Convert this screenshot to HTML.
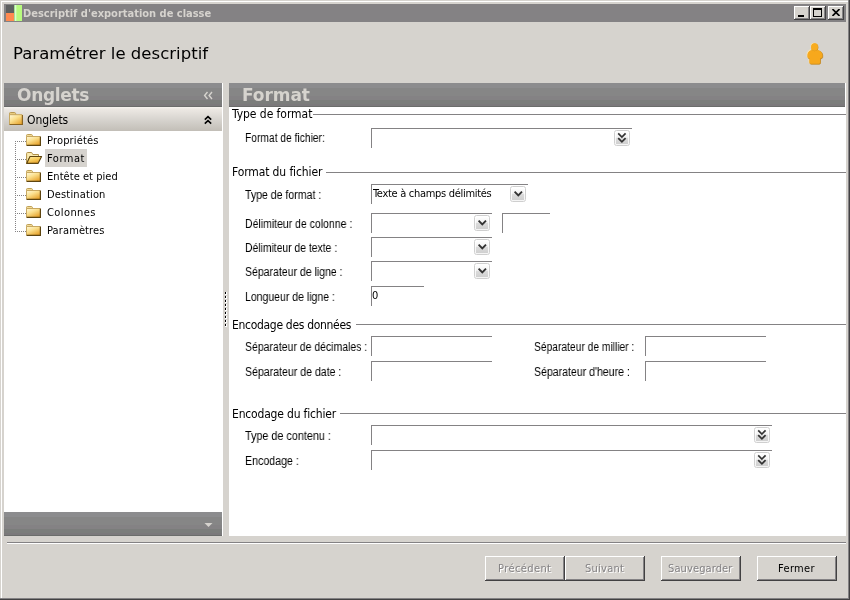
<!DOCTYPE html>
<html lang='fr'><head><meta charset='utf-8'><title>Descriptif d'exportation de classe</title>
<style>
html,body{margin:0;padding:0;width:850px;height:600px;overflow:hidden;background:#D6D3CE}
#w{position:relative;width:850px;height:600px;overflow:hidden}
.a{position:absolute;display:block}
.t{position:absolute;white-space:nowrap;margin:0;padding:0;will-change:transform}
</style></head>
<body><div id='w'>
<div class='a' style='left:0px;top:0px;width:850px;height:600px;background:#D6D3CE;'></div>
<div class='a' style='left:1px;top:1px;width:847px;height:1px;background:#fff;'></div>
<div class='a' style='left:1px;top:1px;width:1px;height:597px;background:#fff;'></div>
<div class='a' style='left:848px;top:0px;width:1px;height:599px;background:#848284;'></div>
<div class='a' style='left:0px;top:598px;width:849px;height:1px;background:#848284;'></div>
<div class='a' style='left:849px;top:0px;width:1px;height:600px;background:#424142;'></div>
<div class='a' style='left:0px;top:599px;width:850px;height:1px;background:#424142;'></div>
<div class='a' style='left:4px;top:4px;width:842px;height:18px;background:#848284;'></div>
<div class='a' style='left:6px;top:5px;width:8px;height:8px;background:#5E6060;'></div>
<div class='a' style='left:6px;top:13px;width:8px;height:8px;background:#FF8A50;'></div>
<div class='a' style='left:14px;top:5px;width:8px;height:16px;background:linear-gradient(90deg,#8fd070 0,#d8ffd0 1.5px,#B8FB7E 3px);'></div>
<div class='a' style='left:794px;top:6px;width:16px;height:14px;background:#D6D3CE;box-shadow:inset -1px -1px 0 #424142, inset 1px 1px 0 #fff, inset -2px -2px 0 #848284;'><div class='a' style='left:4px;top:9px;width:6px;height:2px;background:#000'></div></div>
<div class='a' style='left:810px;top:6px;width:16px;height:14px;background:#D6D3CE;box-shadow:inset -1px -1px 0 #424142, inset 1px 1px 0 #fff, inset -2px -2px 0 #848284;'><div class='a' style='left:3px;top:2px;width:9px;height:9px;box-sizing:border-box;border:1px solid #000;border-top-width:2px'></div></div>
<div class='a' style='left:828px;top:6px;width:16px;height:14px;background:#D6D3CE;box-shadow:inset -1px -1px 0 #424142, inset 1px 1px 0 #fff, inset -2px -2px 0 #848284;'><svg class='a' style='left:4px;top:3px' width='8' height='7' viewBox='0 0 8 7'><path d='M0.5 0 L7.5 7 M7.5 0 L0.5 7' stroke='#000' stroke-width='1.6' fill='none'/></svg></div>
<svg class='a' style='left:805px;top:42px' width='20' height='24' viewBox='0 0 20 24'>
<g stroke-linejoin='round'>
<path d='M6.2 8.2 C4 8.8 2.6 10.5 2.6 12.8 L2.6 14.8 Q2.7 16.4 4.5 16.3 L4.5 20.4 Q4.5 21.7 5.8 21.7 L13.7 21.7 Q15 21.7 15 20.4 L15 16.3 Q16.9 16.4 17.2 14.8 L17.2 12.8 C17.2 10.5 15.5 8.8 13 8.2 Z' transform='translate(-0.5,-0.5)' fill='#FFE4A8' stroke='#FFE4A8' stroke-width='0.8'/>
<ellipse cx='9.2' cy='4.6' rx='3.6' ry='3.9' fill='#FFE4A8'/>
<path d='M6.2 8.2 C4 8.8 2.6 10.5 2.6 12.8 L2.6 14.8 Q2.7 16.4 4.5 16.3 L4.5 20.4 Q4.5 21.7 5.8 21.7 L13.7 21.7 Q15 21.7 15 20.4 L15 16.3 Q16.9 16.4 17.2 14.8 L17.2 12.8 C17.2 10.5 15.5 8.8 13 8.2 Z' transform='translate(0.5,0.5)' fill='#C88A20' stroke='#C88A20' stroke-width='0.8'/>
<ellipse cx='9.9' cy='5.3' rx='3.5' ry='3.8' fill='#D09028'/>
<path d='M6.2 8.2 C4 8.8 2.6 10.5 2.6 12.8 L2.6 14.8 Q2.7 16.4 4.5 16.3 L4.5 20.4 Q4.5 21.7 5.8 21.7 L13.7 21.7 Q15 21.7 15 20.4 L15 16.3 Q16.9 16.4 17.2 14.8 L17.2 12.8 C17.2 10.5 15.5 8.8 13 8.2 Z' fill='#F7A81C'/>
<path d='M6.3 7.2 Q9.6 10.2 12.9 7.2' fill='none' stroke='#D08C18' stroke-width='0.9'/>
<ellipse cx='9.55' cy='4.95' rx='3.4' ry='3.7' fill='#F8AC20'/>
</g></svg>
<div class='a' style='left:4px;top:83px;width:219px;height:453px;background:#fff;'></div>
<div class='a' style='left:4px;top:83px;width:218px;height:24px;background:linear-gradient(#8C8C8E 0,#8C8C8E 4.5px,#868686 5.5px,#868686 12.5px,#848284 13.5px,#848284 16.5px,#7B7D7B 17.5px,#7B7D7B 20.5px,#7B797B 21.5px,#7B797B 22.8px,#6B6D6B 23px,#6B6D6B 24px);'></div>
<div class='a' style='left:4px;top:107px;width:218px;height:24px;background:linear-gradient(#F6F3EF 0,#ECE8E3 10%,#D8D5D0 50%,#C2BEB7 100%);'></div>
<div class='a' style='left:4px;top:512px;width:218px;height:24px;background:linear-gradient(#8C8C8E 0,#8C8C8E 4.5px,#868686 5.5px,#868686 12.5px,#848284 13.5px,#848284 16.5px,#7B7D7B 17.5px,#7B7D7B 20.5px,#7B797B 21.5px,#7B797B 22.8px,#6B6D6B 23px,#6B6D6B 24px);'></div>
<svg class='a' style='left:203px;top:91px' width='11' height='9' viewBox='0 0 11 9'><path d='M4.5 1 L1.6 4.5 L4.5 8 M9 1 L6.1 4.5 L9 8' stroke='#D6D3CE' stroke-width='1.4' fill='none'/></svg>
<svg class='a' style='left:203px;top:115px' width='10' height='10' viewBox='0 0 10 10'><path d='M1.8 4.6 L5 1.6 L8.2 4.6 M1.8 8.6 L5 5.6 L8.2 8.6' stroke='#000' stroke-width='1.6' fill='none'/></svg>
<svg class='a' style='left:204px;top:522px' width='9' height='6' viewBox='0 0 9 6'><path d='M0.5 1 L8.5 1 L4.5 5 Z' fill='#D6D3CE'/></svg>
<div class='a' style='left:225px;top:292px;width:2.4px;height:3px;background:#fff;'></div>
<div class='a' style='left:225px;top:292px;width:1.3px;height:2px;background:#000;'></div>
<div class='a' style='left:225px;top:296px;width:2.4px;height:3px;background:#fff;'></div>
<div class='a' style='left:225px;top:296px;width:1.3px;height:2px;background:#000;'></div>
<div class='a' style='left:225px;top:300px;width:2.4px;height:3px;background:#fff;'></div>
<div class='a' style='left:225px;top:300px;width:1.3px;height:2px;background:#000;'></div>
<div class='a' style='left:225px;top:304px;width:2.4px;height:3px;background:#fff;'></div>
<div class='a' style='left:225px;top:304px;width:1.3px;height:2px;background:#000;'></div>
<div class='a' style='left:225px;top:308px;width:2.4px;height:3px;background:#fff;'></div>
<div class='a' style='left:225px;top:308px;width:1.3px;height:2px;background:#000;'></div>
<div class='a' style='left:225px;top:312px;width:2.4px;height:3px;background:#fff;'></div>
<div class='a' style='left:225px;top:312px;width:1.3px;height:2px;background:#000;'></div>
<div class='a' style='left:225px;top:316px;width:2.4px;height:3px;background:#fff;'></div>
<div class='a' style='left:225px;top:316px;width:1.3px;height:2px;background:#000;'></div>
<div class='a' style='left:225px;top:320px;width:2.4px;height:3px;background:#fff;'></div>
<div class='a' style='left:225px;top:320px;width:1.3px;height:2px;background:#000;'></div>
<div class='a' style='left:225px;top:324px;width:2.4px;height:3px;background:#fff;'></div>
<div class='a' style='left:225px;top:324px;width:1.3px;height:2px;background:#000;'></div>
<div class='a' style='left:229px;top:83px;width:617px;height:453px;background:#fff;'></div>
<div class='a' style='left:229px;top:83px;width:616px;height:24px;background:linear-gradient(#8C8C8E 0,#8C8C8E 4.5px,#868686 5.5px,#868686 12.5px,#848284 13.5px,#848284 16.5px,#7B7D7B 17.5px,#7B7D7B 20.5px,#7B797B 21.5px,#7B797B 22.8px,#6B6D6B 23px,#6B6D6B 24px);'></div>
<svg class='a' style='left:9px;top:112px' width='15' height='14' viewBox='0 0 15 14'>
<defs><linearGradient id='gg' x1='0' y1='0' x2='0.8' y2='1'><stop offset='0' stop-color='#FFF9DC'/><stop offset='0.45' stop-color='#FBE08E'/><stop offset='1' stop-color='#E6A22C'/></linearGradient></defs>
<path d='M0.5 3 L0.5 1.5 Q0.5 0.5 1.5 0.5 L5.5 0.5 Q6.3 0.5 6.6 1.5 L7 3 Z' fill='#E8CC80' stroke='#B89850' stroke-width='1'/>
<rect x='0.5' y='2.7' width='13' height='10' fill='url(#gg)' stroke='none'/>
<path d='M0.5 12.5 L0.5 2.7 L13.2 2.7' fill='none' stroke='#C8A860' stroke-width='1'/>
<path d='M0.5 12.5 L13.4 12.5 L13.4 2.9' fill='none' stroke='#8A6420' stroke-width='1.2'/>
</svg>
<div class='a' style='left:15px;top:141px;width:1px;height:91px;background:repeating-linear-gradient(180deg,#848284 0 1px,transparent 1px 2px);'></div>
<div class='a' style='left:15px;top:141px;width:11px;height:1px;background:repeating-linear-gradient(90deg,#848284 0 1px,transparent 1px 2px);'></div>
<svg class='a' style='left:26px;top:134px' width='16' height='13' viewBox='0 0 16 13'>
<defs><linearGradient id='fg1' x1='0' y1='0' x2='0.7' y2='1'><stop offset='0' stop-color='#FFF9DC'/><stop offset='0.45' stop-color='#FBE08E'/><stop offset='1' stop-color='#E6A22C'/></linearGradient></defs>
<path d='M0.5 2.5 L0.5 1.5 Q0.5 0.5 1.5 0.5 L5.3 0.5 Q6.2 0.5 6.5 1.5 L6.8 2.5 Z' fill='#F3DC98' stroke='#BFA058' stroke-width='1'/>
<rect x='0.5' y='2.5' width='14' height='9' fill='url(#fg1)' stroke='none'/>
<path d='M0.5 11 L0.5 2.5 L14 2.5' fill='none' stroke='#C8A860' stroke-width='1'/>
<path d='M0.5 11.4 L14.4 11.4 L14.4 2.6' fill='none' stroke='#5E4510' stroke-width='1.2'/>
</svg>
<div class='a' style='left:15px;top:159px;width:11px;height:1px;background:repeating-linear-gradient(90deg,#848284 0 1px,transparent 1px 2px);'></div>
<svg class='a' style='left:26px;top:152px' width='17' height='13' viewBox='0 0 17 13'>
<defs><linearGradient id='og' x1='0' y1='0' x2='0.6' y2='1'><stop offset='0' stop-color='#FFF0B0'/><stop offset='0.5' stop-color='#F9D060'/><stop offset='1' stop-color='#E6A22C'/></linearGradient></defs>
<path d='M0.6 11.4 L0.6 1.5 Q0.6 0.5 1.6 0.5 L5.2 0.5 Q6.1 0.5 6.4 1.5 L6.8 2.5 L12.5 2.5 L12.5 4.5 L4 4.5 Z' fill='#FBEBB0' stroke='#B09048' stroke-width='1'/>
<path d='M4 4.5 L15.6 4.5 L12 11.4 L0.7 11.4 Z' fill='url(#og)' stroke='#5E4510' stroke-width='1.1' stroke-linejoin='round'/>
</svg>
<div class='a' style='left:15px;top:177px;width:11px;height:1px;background:repeating-linear-gradient(90deg,#848284 0 1px,transparent 1px 2px);'></div>
<svg class='a' style='left:26px;top:170px' width='16' height='13' viewBox='0 0 16 13'>
<defs><linearGradient id='fg2' x1='0' y1='0' x2='0.7' y2='1'><stop offset='0' stop-color='#FFF9DC'/><stop offset='0.45' stop-color='#FBE08E'/><stop offset='1' stop-color='#E6A22C'/></linearGradient></defs>
<path d='M0.5 2.5 L0.5 1.5 Q0.5 0.5 1.5 0.5 L5.3 0.5 Q6.2 0.5 6.5 1.5 L6.8 2.5 Z' fill='#F3DC98' stroke='#BFA058' stroke-width='1'/>
<rect x='0.5' y='2.5' width='14' height='9' fill='url(#fg2)' stroke='none'/>
<path d='M0.5 11 L0.5 2.5 L14 2.5' fill='none' stroke='#C8A860' stroke-width='1'/>
<path d='M0.5 11.4 L14.4 11.4 L14.4 2.6' fill='none' stroke='#5E4510' stroke-width='1.2'/>
</svg>
<div class='a' style='left:15px;top:195px;width:11px;height:1px;background:repeating-linear-gradient(90deg,#848284 0 1px,transparent 1px 2px);'></div>
<svg class='a' style='left:26px;top:188px' width='16' height='13' viewBox='0 0 16 13'>
<defs><linearGradient id='fg3' x1='0' y1='0' x2='0.7' y2='1'><stop offset='0' stop-color='#FFF9DC'/><stop offset='0.45' stop-color='#FBE08E'/><stop offset='1' stop-color='#E6A22C'/></linearGradient></defs>
<path d='M0.5 2.5 L0.5 1.5 Q0.5 0.5 1.5 0.5 L5.3 0.5 Q6.2 0.5 6.5 1.5 L6.8 2.5 Z' fill='#F3DC98' stroke='#BFA058' stroke-width='1'/>
<rect x='0.5' y='2.5' width='14' height='9' fill='url(#fg3)' stroke='none'/>
<path d='M0.5 11 L0.5 2.5 L14 2.5' fill='none' stroke='#C8A860' stroke-width='1'/>
<path d='M0.5 11.4 L14.4 11.4 L14.4 2.6' fill='none' stroke='#5E4510' stroke-width='1.2'/>
</svg>
<div class='a' style='left:15px;top:213px;width:11px;height:1px;background:repeating-linear-gradient(90deg,#848284 0 1px,transparent 1px 2px);'></div>
<svg class='a' style='left:26px;top:206px' width='16' height='13' viewBox='0 0 16 13'>
<defs><linearGradient id='fg4' x1='0' y1='0' x2='0.7' y2='1'><stop offset='0' stop-color='#FFF9DC'/><stop offset='0.45' stop-color='#FBE08E'/><stop offset='1' stop-color='#E6A22C'/></linearGradient></defs>
<path d='M0.5 2.5 L0.5 1.5 Q0.5 0.5 1.5 0.5 L5.3 0.5 Q6.2 0.5 6.5 1.5 L6.8 2.5 Z' fill='#F3DC98' stroke='#BFA058' stroke-width='1'/>
<rect x='0.5' y='2.5' width='14' height='9' fill='url(#fg4)' stroke='none'/>
<path d='M0.5 11 L0.5 2.5 L14 2.5' fill='none' stroke='#C8A860' stroke-width='1'/>
<path d='M0.5 11.4 L14.4 11.4 L14.4 2.6' fill='none' stroke='#5E4510' stroke-width='1.2'/>
</svg>
<div class='a' style='left:15px;top:231px;width:11px;height:1px;background:repeating-linear-gradient(90deg,#848284 0 1px,transparent 1px 2px);'></div>
<svg class='a' style='left:26px;top:224px' width='16' height='13' viewBox='0 0 16 13'>
<defs><linearGradient id='fg5' x1='0' y1='0' x2='0.7' y2='1'><stop offset='0' stop-color='#FFF9DC'/><stop offset='0.45' stop-color='#FBE08E'/><stop offset='1' stop-color='#E6A22C'/></linearGradient></defs>
<path d='M0.5 2.5 L0.5 1.5 Q0.5 0.5 1.5 0.5 L5.3 0.5 Q6.2 0.5 6.5 1.5 L6.8 2.5 Z' fill='#F3DC98' stroke='#BFA058' stroke-width='1'/>
<rect x='0.5' y='2.5' width='14' height='9' fill='url(#fg5)' stroke='none'/>
<path d='M0.5 11 L0.5 2.5 L14 2.5' fill='none' stroke='#C8A860' stroke-width='1'/>
<path d='M0.5 11.4 L14.4 11.4 L14.4 2.6' fill='none' stroke='#5E4510' stroke-width='1.2'/>
</svg>
<div class='a' style='left:45px;top:149px;width:42px;height:18px;background:#D6D3CE;'></div>
<div class='a' style='left:313px;top:114px;width:533px;height:1px;background:#848284;'></div>
<div class='a' style='left:326px;top:172px;width:520px;height:1px;background:#848284;'></div>
<div class='a' style='left:356px;top:324px;width:490px;height:1px;background:#848284;'></div>
<div class='a' style='left:340px;top:413px;width:506px;height:1px;background:#848284;'></div>
<div class='a' style='left:371px;top:128px;width:261px;height:20px;border-top:1px solid #848284;border-left:1px solid #848284;box-sizing:border-box;background:#fff;'></div>
<svg class='a' style='left:614px;top:130px' width='16' height='16' viewBox='0 0 16 16'><defs><linearGradient id='b5' x1='0' y1='0' x2='0' y2='1'><stop offset='0' stop-color='#fff'/><stop offset='0.45' stop-color='#f2f2f2'/><stop offset='0.5' stop-color='#dcdcdc'/><stop offset='1' stop-color='#cfcfcf'/></linearGradient></defs><rect x='0.5' y='0.5' width='15' height='15' rx='2' fill='#fff' stroke='#cfcfcf'/><rect x='1.8' y='1.8' width='12.4' height='12.4' fill='url(#b5)'/><path d='M4.2 3.3 L7.9 7 L11.6 3.3 M4.2 8.1 L7.9 11.8 L11.6 8.1' stroke='#333' stroke-width='1.7' fill='none'/></svg>
<div class='a' style='left:371px;top:184px;width:157px;height:20px;border-top:1px solid #848284;border-left:1px solid #848284;box-sizing:border-box;background:#fff;'></div>
<svg class='a' style='left:510px;top:186px' width='16' height='16' viewBox='0 0 16 16'><defs><linearGradient id='b6' x1='0' y1='0' x2='0' y2='1'><stop offset='0' stop-color='#fff'/><stop offset='0.45' stop-color='#f2f2f2'/><stop offset='0.5' stop-color='#dcdcdc'/><stop offset='1' stop-color='#cfcfcf'/></linearGradient></defs><rect x='0.5' y='0.5' width='15' height='15' rx='2' fill='#fff' stroke='#cfcfcf'/><rect x='1.8' y='1.8' width='12.4' height='12.4' fill='url(#b6)'/><path d='M4.6 5.6 L8.3 9.4 L12 5.6' stroke='#333' stroke-width='1.9' fill='none'/></svg>
<div class='a' style='left:371px;top:213px;width:121px;height:20px;border-top:1px solid #848284;border-left:1px solid #848284;box-sizing:border-box;background:#fff;'></div>
<svg class='a' style='left:474px;top:215px' width='16' height='16' viewBox='0 0 16 16'><defs><linearGradient id='b7' x1='0' y1='0' x2='0' y2='1'><stop offset='0' stop-color='#fff'/><stop offset='0.45' stop-color='#f2f2f2'/><stop offset='0.5' stop-color='#dcdcdc'/><stop offset='1' stop-color='#cfcfcf'/></linearGradient></defs><rect x='0.5' y='0.5' width='15' height='15' rx='2' fill='#fff' stroke='#cfcfcf'/><rect x='1.8' y='1.8' width='12.4' height='12.4' fill='url(#b7)'/><path d='M4.6 5.6 L8.3 9.4 L12 5.6' stroke='#333' stroke-width='1.9' fill='none'/></svg>
<div class='a' style='left:502px;top:213px;width:48px;height:20px;border-top:1px solid #848284;border-left:1px solid #848284;box-sizing:border-box;background:#fff;'></div>
<div class='a' style='left:371px;top:237px;width:121px;height:20px;border-top:1px solid #848284;border-left:1px solid #848284;box-sizing:border-box;background:#fff;'></div>
<svg class='a' style='left:474px;top:239px' width='16' height='16' viewBox='0 0 16 16'><defs><linearGradient id='b8' x1='0' y1='0' x2='0' y2='1'><stop offset='0' stop-color='#fff'/><stop offset='0.45' stop-color='#f2f2f2'/><stop offset='0.5' stop-color='#dcdcdc'/><stop offset='1' stop-color='#cfcfcf'/></linearGradient></defs><rect x='0.5' y='0.5' width='15' height='15' rx='2' fill='#fff' stroke='#cfcfcf'/><rect x='1.8' y='1.8' width='12.4' height='12.4' fill='url(#b8)'/><path d='M4.6 5.6 L8.3 9.4 L12 5.6' stroke='#333' stroke-width='1.9' fill='none'/></svg>
<div class='a' style='left:371px;top:261px;width:121px;height:20px;border-top:1px solid #848284;border-left:1px solid #848284;box-sizing:border-box;background:#fff;'></div>
<svg class='a' style='left:474px;top:263px' width='16' height='16' viewBox='0 0 16 16'><defs><linearGradient id='b9' x1='0' y1='0' x2='0' y2='1'><stop offset='0' stop-color='#fff'/><stop offset='0.45' stop-color='#f2f2f2'/><stop offset='0.5' stop-color='#dcdcdc'/><stop offset='1' stop-color='#cfcfcf'/></linearGradient></defs><rect x='0.5' y='0.5' width='15' height='15' rx='2' fill='#fff' stroke='#cfcfcf'/><rect x='1.8' y='1.8' width='12.4' height='12.4' fill='url(#b9)'/><path d='M4.6 5.6 L8.3 9.4 L12 5.6' stroke='#333' stroke-width='1.9' fill='none'/></svg>
<div class='a' style='left:371px;top:286px;width:53px;height:20px;border-top:1px solid #848284;border-left:1px solid #848284;box-sizing:border-box;background:#fff;'></div>
<div class='a' style='left:371px;top:336px;width:121px;height:20px;border-top:1px solid #848284;border-left:1px solid #848284;box-sizing:border-box;background:#fff;'></div>
<div class='a' style='left:645px;top:336px;width:121px;height:20px;border-top:1px solid #848284;border-left:1px solid #848284;box-sizing:border-box;background:#fff;'></div>
<div class='a' style='left:371px;top:361px;width:121px;height:20px;border-top:1px solid #848284;border-left:1px solid #848284;box-sizing:border-box;background:#fff;'></div>
<div class='a' style='left:645px;top:361px;width:121px;height:20px;border-top:1px solid #848284;border-left:1px solid #848284;box-sizing:border-box;background:#fff;'></div>
<div class='a' style='left:371px;top:425px;width:401px;height:20px;border-top:1px solid #848284;border-left:1px solid #848284;box-sizing:border-box;background:#fff;'></div>
<svg class='a' style='left:754px;top:427px' width='16' height='16' viewBox='0 0 16 16'><defs><linearGradient id='b10' x1='0' y1='0' x2='0' y2='1'><stop offset='0' stop-color='#fff'/><stop offset='0.45' stop-color='#f2f2f2'/><stop offset='0.5' stop-color='#dcdcdc'/><stop offset='1' stop-color='#cfcfcf'/></linearGradient></defs><rect x='0.5' y='0.5' width='15' height='15' rx='2' fill='#fff' stroke='#cfcfcf'/><rect x='1.8' y='1.8' width='12.4' height='12.4' fill='url(#b10)'/><path d='M4.2 3.3 L7.9 7 L11.6 3.3 M4.2 8.1 L7.9 11.8 L11.6 8.1' stroke='#333' stroke-width='1.7' fill='none'/></svg>
<div class='a' style='left:371px;top:450px;width:401px;height:20px;border-top:1px solid #848284;border-left:1px solid #848284;box-sizing:border-box;background:#fff;'></div>
<svg class='a' style='left:754px;top:452px' width='16' height='16' viewBox='0 0 16 16'><defs><linearGradient id='b11' x1='0' y1='0' x2='0' y2='1'><stop offset='0' stop-color='#fff'/><stop offset='0.45' stop-color='#f2f2f2'/><stop offset='0.5' stop-color='#dcdcdc'/><stop offset='1' stop-color='#cfcfcf'/></linearGradient></defs><rect x='0.5' y='0.5' width='15' height='15' rx='2' fill='#fff' stroke='#cfcfcf'/><rect x='1.8' y='1.8' width='12.4' height='12.4' fill='url(#b11)'/><path d='M4.2 3.3 L7.9 7 L11.6 3.3 M4.2 8.1 L7.9 11.8 L11.6 8.1' stroke='#333' stroke-width='1.7' fill='none'/></svg>
<div class='a' style='left:7px;top:542px;width:839px;height:1px;background:#848284;'></div>
<div class='a' style='left:7px;top:543px;width:839px;height:1px;background:#fff;'></div>
<div class='a' style='left:485px;top:556px;width:80px;height:25px;background:#D6D3CE;box-shadow:inset -1px -1px 0 #424142, inset 1px 1px 0 #fff, inset -2px -2px 0 #848284;'></div>
<div class='a' style='left:565px;top:556px;width:80px;height:25px;background:#D6D3CE;box-shadow:inset -1px -1px 0 #424142, inset 1px 1px 0 #fff, inset -2px -2px 0 #848284;'></div>
<div class='a' style='left:661px;top:556px;width:80px;height:25px;background:#D6D3CE;box-shadow:inset -1px -1px 0 #424142, inset 1px 1px 0 #fff, inset -2px -2px 0 #848284;'></div>
<div class='a' style='left:757px;top:556px;width:80px;height:25px;background:#D6D3CE;box-shadow:inset -1px -1px 0 #424142, inset 1px 1px 0 #fff, inset -2px -2px 0 #848284;'></div>
<div class='t' style='left:23.2px;top:7.00px;font-family:"DejaVu Sans Condensed", "Liberation Sans", sans-serif;font-size:11px;font-weight:bold;line-height:14px;letter-spacing:-0.005px;color:#D6D3CE;'>Descriptif d'exportation de classe</div>
<div class='t' style='left:13.0px;top:43.00px;font-family:"DejaVu Sans", "Liberation Sans", sans-serif;font-size:16.5px;font-weight:normal;line-height:21px;letter-spacing:0.026px;color:#000;'>Paramétrer le descriptif</div>
<div class='t' style='left:17.0px;top:84.00px;font-family:"DejaVu Sans", "Liberation Sans", sans-serif;font-size:17px;font-weight:bold;line-height:22px;letter-spacing:-0.321px;color:#D6D3CE;'>Onglets</div>
<div class='t' style='left:242.0px;top:84.00px;font-family:"DejaVu Sans", "Liberation Sans", sans-serif;font-size:17px;font-weight:bold;line-height:22px;letter-spacing:-0.062px;color:#D6D3CE;'>Format</div>
<div class='t' style='left:27.4px;top:112.00px;font-family:"DejaVu Sans Condensed", "Liberation Sans", sans-serif;font-size:12px;font-weight:normal;line-height:16px;letter-spacing:-0.084px;color:#000;'>Onglets</div>
<div class='t' style='left:47.0px;top:134.00px;font-family:"DejaVu Sans Condensed", "Liberation Sans", sans-serif;font-size:11px;font-weight:normal;line-height:14px;letter-spacing:0.159px;color:#000;'>Propriétés</div>
<div class='t' style='left:47.0px;top:152.00px;font-family:"DejaVu Sans Condensed", "Liberation Sans", sans-serif;font-size:11px;font-weight:normal;line-height:14px;letter-spacing:0.517px;color:#000;'>Format</div>
<div class='t' style='left:47.0px;top:170.00px;font-family:"DejaVu Sans Condensed", "Liberation Sans", sans-serif;font-size:11px;font-weight:normal;line-height:14px;letter-spacing:0.052px;color:#000;'>Entête et pied</div>
<div class='t' style='left:47.0px;top:188.00px;font-family:"DejaVu Sans Condensed", "Liberation Sans", sans-serif;font-size:11px;font-weight:normal;line-height:14px;letter-spacing:0.16px;color:#000;'>Destination</div>
<div class='t' style='left:47.0px;top:206.00px;font-family:"DejaVu Sans Condensed", "Liberation Sans", sans-serif;font-size:11px;font-weight:normal;line-height:14px;letter-spacing:0.403px;color:#000;'>Colonnes</div>
<div class='t' style='left:47.0px;top:224.00px;font-family:"DejaVu Sans Condensed", "Liberation Sans", sans-serif;font-size:11px;font-weight:normal;line-height:14px;letter-spacing:0.116px;color:#000;'>Paramètres</div>
<div class='t' style='left:232.0px;top:106.40px;font-family:"DejaVu Sans Condensed", "Liberation Sans", sans-serif;font-size:12px;font-weight:normal;line-height:16px;letter-spacing:-0.043px;color:#000;'>Type de format</div>
<div class='t' style='left:232.0px;top:164.40px;font-family:"DejaVu Sans Condensed", "Liberation Sans", sans-serif;font-size:12px;font-weight:normal;line-height:16px;letter-spacing:-0.113px;color:#000;'>Format du fichier</div>
<div class='t' style='left:232.0px;top:316.60px;font-family:"DejaVu Sans Condensed", "Liberation Sans", sans-serif;font-size:12px;font-weight:normal;line-height:16px;letter-spacing:-0.306px;color:#000;'>Encodage des données</div>
<div class='t' style='left:232.0px;top:405.60px;font-family:"DejaVu Sans Condensed", "Liberation Sans", sans-serif;font-size:12px;font-weight:normal;line-height:16px;letter-spacing:-0.177px;color:#000;'>Encodage du fichier</div>
<div class='t' style='left:245.0px;top:130.40px;font-family:"Liberation Sans", sans-serif;font-size:12px;font-weight:normal;line-height:16px;transform:scaleX(0.8549);transform-origin:0 0;color:#000;'>Format de fichier:</div>
<div class='t' style='left:245.0px;top:186.50px;font-family:"Liberation Sans", sans-serif;font-size:12px;font-weight:normal;line-height:16px;transform:scaleX(0.8792);transform-origin:0 0;color:#000;'>Type de format :</div>
<div class='t' style='left:245.0px;top:216.00px;font-family:"Liberation Sans", sans-serif;font-size:12px;font-weight:normal;line-height:16px;transform:scaleX(0.8737);transform-origin:0 0;color:#000;'>Délimiteur de colonne :</div>
<div class='t' style='left:245.0px;top:240.00px;font-family:"Liberation Sans", sans-serif;font-size:12px;font-weight:normal;line-height:16px;transform:scaleX(0.8633);transform-origin:0 0;color:#000;'>Délimiteur de texte :</div>
<div class='t' style='left:245.0px;top:264.20px;font-family:"Liberation Sans", sans-serif;font-size:12px;font-weight:normal;line-height:16px;transform:scaleX(0.8754);transform-origin:0 0;color:#000;'>Séparateur de ligne :</div>
<div class='t' style='left:245.0px;top:289.00px;font-family:"Liberation Sans", sans-serif;font-size:12px;font-weight:normal;line-height:16px;transform:scaleX(0.8743);transform-origin:0 0;color:#000;'>Longueur de ligne :</div>
<div class='t' style='left:245.0px;top:339.00px;font-family:"Liberation Sans", sans-serif;font-size:12px;font-weight:normal;line-height:16px;transform:scaleX(0.8725);transform-origin:0 0;color:#000;'>Séparateur de décimales :</div>
<div class='t' style='left:245.0px;top:364.00px;font-family:"Liberation Sans", sans-serif;font-size:12px;font-weight:normal;line-height:16px;transform:scaleX(0.8804);transform-origin:0 0;color:#000;'>Séparateur de date :</div>
<div class='t' style='left:534.1px;top:339.00px;font-family:"Liberation Sans", sans-serif;font-size:12px;font-weight:normal;line-height:16px;transform:scaleX(0.8546);transform-origin:0 0;color:#000;'>Séparateur de millier :</div>
<div class='t' style='left:534.1px;top:364.00px;font-family:"Liberation Sans", sans-serif;font-size:12px;font-weight:normal;line-height:16px;transform:scaleX(0.8781);transform-origin:0 0;color:#000;'>Séparateur d'heure :</div>
<div class='t' style='left:245.0px;top:428.00px;font-family:"Liberation Sans", sans-serif;font-size:12px;font-weight:normal;line-height:16px;transform:scaleX(0.8998);transform-origin:0 0;color:#000;'>Type de contenu :</div>
<div class='t' style='left:245.0px;top:453.00px;font-family:"Liberation Sans", sans-serif;font-size:12px;font-weight:normal;line-height:16px;transform:scaleX(0.8868);transform-origin:0 0;color:#000;'>Encodage :</div>
<div class='t' style='left:373.3px;top:186.60px;font-family:"DejaVu Sans Condensed", "Liberation Sans", sans-serif;font-size:11px;font-weight:normal;line-height:14px;letter-spacing:-0.302px;color:#000;'>Texte à champs délimités</div>
<div class='t' style='left:372.4px;top:289.00px;font-family:"DejaVu Sans Condensed", "Liberation Sans", sans-serif;font-size:11px;font-weight:normal;line-height:14px;letter-spacing:0px;color:#000;'>0</div>
<div class='t' style='left:498.4px;top:562.00px;font-family:"DejaVu Sans Condensed", "Liberation Sans", sans-serif;font-size:11px;font-weight:normal;line-height:14px;letter-spacing:0.406px;color:#848284;text-shadow:1px 1px 0 #fff;'>Précédent</div>
<div class='t' style='left:585.4px;top:562.00px;font-family:"DejaVu Sans Condensed", "Liberation Sans", sans-serif;font-size:11px;font-weight:normal;line-height:14px;letter-spacing:0.268px;color:#848284;text-shadow:1px 1px 0 #fff;'>Suivant</div>
<div class='t' style='left:668.3px;top:562.00px;font-family:"DejaVu Sans Condensed", "Liberation Sans", sans-serif;font-size:11px;font-weight:normal;line-height:14px;letter-spacing:0.117px;color:#848284;text-shadow:1px 1px 0 #fff;'>Sauvegarder</div>
<div class='t' style='left:778.0px;top:562.00px;font-family:"DejaVu Sans Condensed", "Liberation Sans", sans-serif;font-size:11px;font-weight:normal;line-height:14px;letter-spacing:0.348px;color:#000;'>Fermer</div>
</div></body></html>
